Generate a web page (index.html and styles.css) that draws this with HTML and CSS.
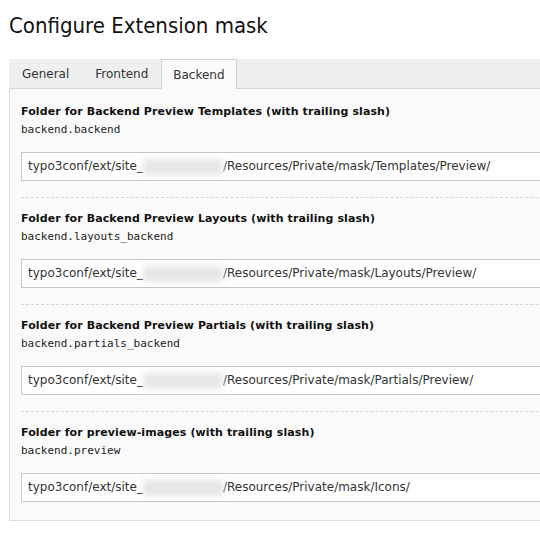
FILE: index.html
```html
<!DOCTYPE html>
<html lang="en">
<head>
  <meta charset="UTF-8" />
  <title>Configure Extension mask</title>
  <link rel="stylesheet" href="styles.css">
</head>
<body>

<h1 class="page-title">Configure Extension mask</h1>

<div class="tabs">
  <div class="tab">General</div>
  <div class="tab">Frontend</div>
  <div class="tab active">Backend</div>
</div>

<div class="panel">
  <div class="field">
    <div class="field-label">Folder for Backend Preview Templates (with trailing slash)</div>
    <div class="field-key">backend.backend</div>
    <div class="field-input">typo3conf/ext/site_<span class="blur"></span>/Resources/Private/mask/Templates/Preview/</div>
  </div>
  <div class="field">
    <div class="field-label">Folder for Backend Preview Layouts (with trailing slash)</div>
    <div class="field-key">backend.layouts_backend</div>
    <div class="field-input">typo3conf/ext/site_<span class="blur"></span>/Resources/Private/mask/Layouts/Preview/</div>
  </div>
  <div class="field">
    <div class="field-label">Folder for Backend Preview Partials (with trailing slash)</div>
    <div class="field-key">backend.partials_backend</div>
    <div class="field-input">typo3conf/ext/site_<span class="blur"></span>/Resources/Private/mask/Partials/Preview/</div>
  </div>
  <div class="field last">
    <div class="field-label">Folder for preview-images (with trailing slash)</div>
    <div class="field-key">backend.preview</div>
    <div class="field-input">typo3conf/ext/site_<span class="blur"></span>/Resources/Private/mask/Icons/</div>
  </div>
</div>

</body>
</html>
```

FILE: styles.css
```css
html {
  overflow: hidden;
}

body {
  margin: 0;
  padding: 0 0 0 9px;
  width: 620px;
  overflow: hidden;
  background: #fff;
  font-family: "DejaVu Sans", Verdana, sans-serif;
  color: #222;
}

.page-title {
  margin: 0;
  height: 59px;
  line-height: 51px;
  font-family: "DejaVu Sans Condensed", "DejaVu Sans", sans-serif;
  font-weight: normal;
  font-size: 22px;
  color: #111;
}

/* Tabs */
.tabs {
  display: flex;
  height: 29px;
  background: #efefef;
  border-bottom: 1px solid #d7d7d7;
}

.tab {
  padding: 0 12px;
  line-height: 29px;
  font-size: 12px;
  color: #333;
  border: 1px solid transparent;
  border-bottom: none;
}

.tab.active {
  padding: 0 11px;
  background: #fafafa;
  border-color: #d0d0d0;
  margin-bottom: -1px;
  height: 29px;
  line-height: 30px;
}

/* Panel */
.panel {
  background: #fafafa;
  border: 1px solid #dcdcdc;
  border-top: none;
  padding: 15px 0 18px 11px;
}

.field {
  padding-bottom: 16px;
  border-bottom: 1px dashed #d4d4d4;
  margin-bottom: 13px;
}

.field.last {
  padding-bottom: 0;
  border-bottom: none;
  margin-bottom: 0;
}

.field-label {
  font-size: 11px;
  font-weight: bold;
  line-height: 16px;
  letter-spacing: 0.1px;
  color: #111;
}

.field-key {
  margin-top: 3px;
  font-family: "DejaVu Sans Mono", monospace;
  font-size: 11px;
  line-height: 14px;
  color: #222;
}

.field-input {
  margin-top: 15px;
  height: 27px;
  line-height: 27px;
  padding-left: 6px;
  background: #fff;
  border: 1px solid #c8c8c8;
  font-size: 12px;
  color: #333;
  white-space: nowrap;
}

.blur {
  display: inline-block;
  width: 80px;
  height: 16px;
  vertical-align: middle;
  background: #e6e6e6;
  filter: blur(3px);
}
```
